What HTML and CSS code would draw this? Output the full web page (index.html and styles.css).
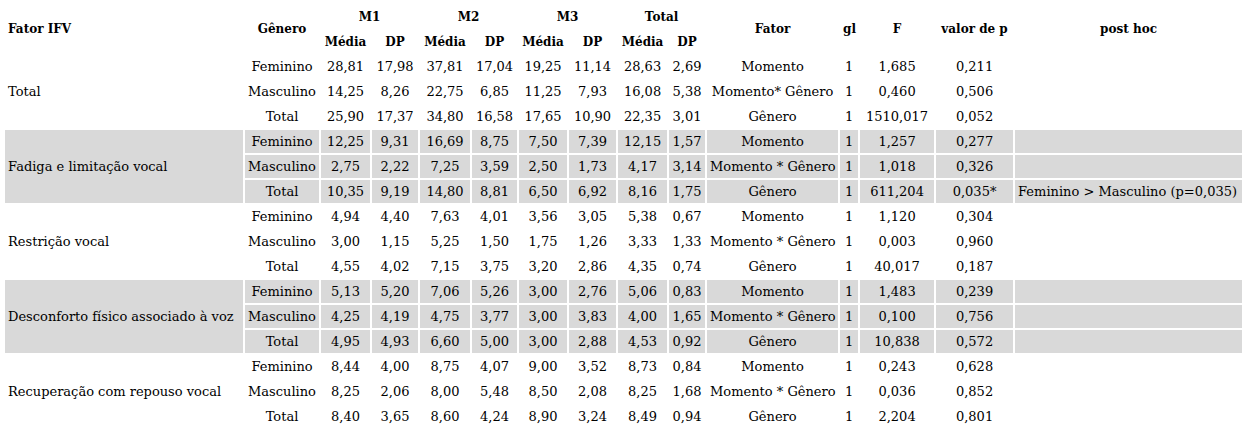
FILE: index.html
```html
<!DOCTYPE html>
<html lang="pt">
<head>
<meta charset="utf-8">
<title>Fator IFV</title>
<link rel="stylesheet" href="styles.css">
</head>
<body>
<table class="ifv">
  <colgroup>
    <col class="c-fator-ifv">
    <col class="c-genero">
    <col class="c-m1m"><col class="c-m1d">
    <col class="c-m2m"><col class="c-m2d">
    <col class="c-m3m"><col class="c-m3d">
    <col class="c-tm"><col class="c-td">
    <col class="c-fator">
    <col class="c-gl">
    <col class="c-f">
    <col class="c-p">
    <col class="c-post">
  </colgroup>
  <thead>
    <tr>
      <th rowspan="2" class="left">Fator IFV</th>
      <th rowspan="2">Gênero</th>
      <th colspan="2">M1</th>
      <th colspan="2">M2</th>
      <th colspan="2">M3</th>
      <th colspan="2">Total</th>
      <th rowspan="2">Fator</th>
      <th rowspan="2">gl</th>
      <th rowspan="2">F</th>
      <th rowspan="2">valor de p</th>
      <th rowspan="2">post hoc</th>
    </tr>
    <tr>
      <th>Média</th><th>DP</th>
      <th>Média</th><th>DP</th>
      <th>Média</th><th>DP</th>
      <th>Média</th><th>DP</th>
    </tr>
  </thead>
  <tbody>
    <tr>
      <td rowspan="3" class="left">Total</td>
      <td>Feminino</td><td>28,81</td><td>17,98</td><td>37,81</td><td>17,04</td><td>19,25</td><td>11,14</td><td>28,63</td><td>2,69</td>
      <td>Momento</td><td>1</td><td>1,685</td><td>0,211</td><td class="left"></td>
    </tr>
    <tr>
      <td>Masculino</td><td>14,25</td><td>8,26</td><td>22,75</td><td>6,85</td><td>11,25</td><td>7,93</td><td>16,08</td><td>5,38</td>
      <td>Momento* Gênero</td><td>1</td><td>0,460</td><td>0,506</td><td class="left"></td>
    </tr>
    <tr>
      <td>Total</td><td>25,90</td><td>17,37</td><td>34,80</td><td>16,58</td><td>17,65</td><td>10,90</td><td>22,35</td><td>3,01</td>
      <td>Gênero</td><td>1</td><td>1510,017</td><td>0,052</td><td class="left"></td>
    </tr>
  </tbody>
  <tbody class="shade">
    <tr>
      <td rowspan="3" class="left">Fadiga e limitação vocal</td>
      <td>Feminino</td><td>12,25</td><td>9,31</td><td>16,69</td><td>8,75</td><td>7,50</td><td>7,39</td><td>12,15</td><td>1,57</td>
      <td>Momento</td><td>1</td><td>1,257</td><td>0,277</td><td class="left"></td>
    </tr>
    <tr>
      <td>Masculino</td><td>2,75</td><td>2,22</td><td>7,25</td><td>3,59</td><td>2,50</td><td>1,73</td><td>4,17</td><td>3,14</td>
      <td>Momento * Gênero</td><td>1</td><td>1,018</td><td>0,326</td><td class="left"></td>
    </tr>
    <tr>
      <td>Total</td><td>10,35</td><td>9,19</td><td>14,80</td><td>8,81</td><td>6,50</td><td>6,92</td><td>8,16</td><td>1,75</td>
      <td>Gênero</td><td>1</td><td>611,204</td><td>0,035*</td><td class="left">Feminino &gt; Masculino (p=0,035)</td>
    </tr>
  </tbody>
  <tbody>
    <tr>
      <td rowspan="3" class="left">Restrição vocal</td>
      <td>Feminino</td><td>4,94</td><td>4,40</td><td>7,63</td><td>4,01</td><td>3,56</td><td>3,05</td><td>5,38</td><td>0,67</td>
      <td>Momento</td><td>1</td><td>1,120</td><td>0,304</td><td class="left"></td>
    </tr>
    <tr>
      <td>Masculino</td><td>3,00</td><td>1,15</td><td>5,25</td><td>1,50</td><td>1,75</td><td>1,26</td><td>3,33</td><td>1,33</td>
      <td>Momento * Gênero</td><td>1</td><td>0,003</td><td>0,960</td><td class="left"></td>
    </tr>
    <tr>
      <td>Total</td><td>4,55</td><td>4,02</td><td>7,15</td><td>3,75</td><td>3,20</td><td>2,86</td><td>4,35</td><td>0,74</td>
      <td>Gênero</td><td>1</td><td>40,017</td><td>0,187</td><td class="left"></td>
    </tr>
  </tbody>
  <tbody class="shade">
    <tr>
      <td rowspan="3" class="left">Desconforto físico associado à voz</td>
      <td>Feminino</td><td>5,13</td><td>5,20</td><td>7,06</td><td>5,26</td><td>3,00</td><td>2,76</td><td>5,06</td><td>0,83</td>
      <td>Momento</td><td>1</td><td>1,483</td><td>0,239</td><td class="left"></td>
    </tr>
    <tr>
      <td>Masculino</td><td>4,25</td><td>4,19</td><td>4,75</td><td>3,77</td><td>3,00</td><td>3,83</td><td>4,00</td><td>1,65</td>
      <td>Momento * Gênero</td><td>1</td><td>0,100</td><td>0,756</td><td class="left"></td>
    </tr>
    <tr>
      <td>Total</td><td>4,95</td><td>4,93</td><td>6,60</td><td>5,00</td><td>3,00</td><td>2,88</td><td>4,53</td><td>0,92</td>
      <td>Gênero</td><td>1</td><td>10,838</td><td>0,572</td><td class="left"></td>
    </tr>
  </tbody>
  <tbody>
    <tr>
      <td rowspan="3" class="left">Recuperação com repouso vocal</td>
      <td>Feminino</td><td>8,44</td><td>4,00</td><td>8,75</td><td>4,07</td><td>9,00</td><td>3,52</td><td>8,73</td><td>0,84</td>
      <td>Momento</td><td>1</td><td>0,243</td><td>0,628</td><td class="left"></td>
    </tr>
    <tr>
      <td>Masculino</td><td>8,25</td><td>2,06</td><td>8,00</td><td>5,48</td><td>8,50</td><td>2,08</td><td>8,25</td><td>1,68</td>
      <td>Momento * Gênero</td><td>1</td><td>0,036</td><td>0,852</td><td class="left"></td>
    </tr>
    <tr>
      <td>Total</td><td>8,40</td><td>3,65</td><td>8,60</td><td>4,24</td><td>8,90</td><td>3,24</td><td>8,49</td><td>0,94</td>
      <td>Gênero</td><td>1</td><td>2,204</td><td>0,801</td><td class="left"></td>
    </tr>
  </tbody>
</table>
</body>
</html>
```

FILE: styles.css
```css
html, body {
  margin: 0;
  padding: 0;
  background: #ffffff;
}

body {
  font-family: "DejaVu Serif", serif;
  font-size: 13px;
  color: #000000;
}

.ifv {
  margin: 3px;
  border-collapse: separate;
  border-spacing: 2px;
  table-layout: fixed;
  width: 1241px;
}

.c-fator-ifv { width: 238px; }
.c-genero { width: 74px; }
.c-m1m { width: 49px; }
.c-m1d { width: 46px; }
.c-m2m { width: 50px; }
.c-m2d { width: 45px; }
.c-m3m { width: 48px; }
.c-m3d { width: 47px; }
.c-tm { width: 49px; }
.c-td { width: 36px; }
.c-fator { width: 131px; }
.c-gl { width: 18px; }
.c-f { width: 74px; }
.c-p { width: 77px; }
.c-post { width: 227px; }

.ifv th,
.ifv td {
  box-sizing: border-box;
  height: 23px;
  padding: 0 3px;
  text-align: center;
  vertical-align: middle;
  white-space: nowrap;
  overflow: hidden;
}

.ifv th {
  font-weight: bold;
  font-size: 12px;
}

.ifv .left {
  text-align: left;
}

.shade td {
  background: #d9d9d9;
}
```
